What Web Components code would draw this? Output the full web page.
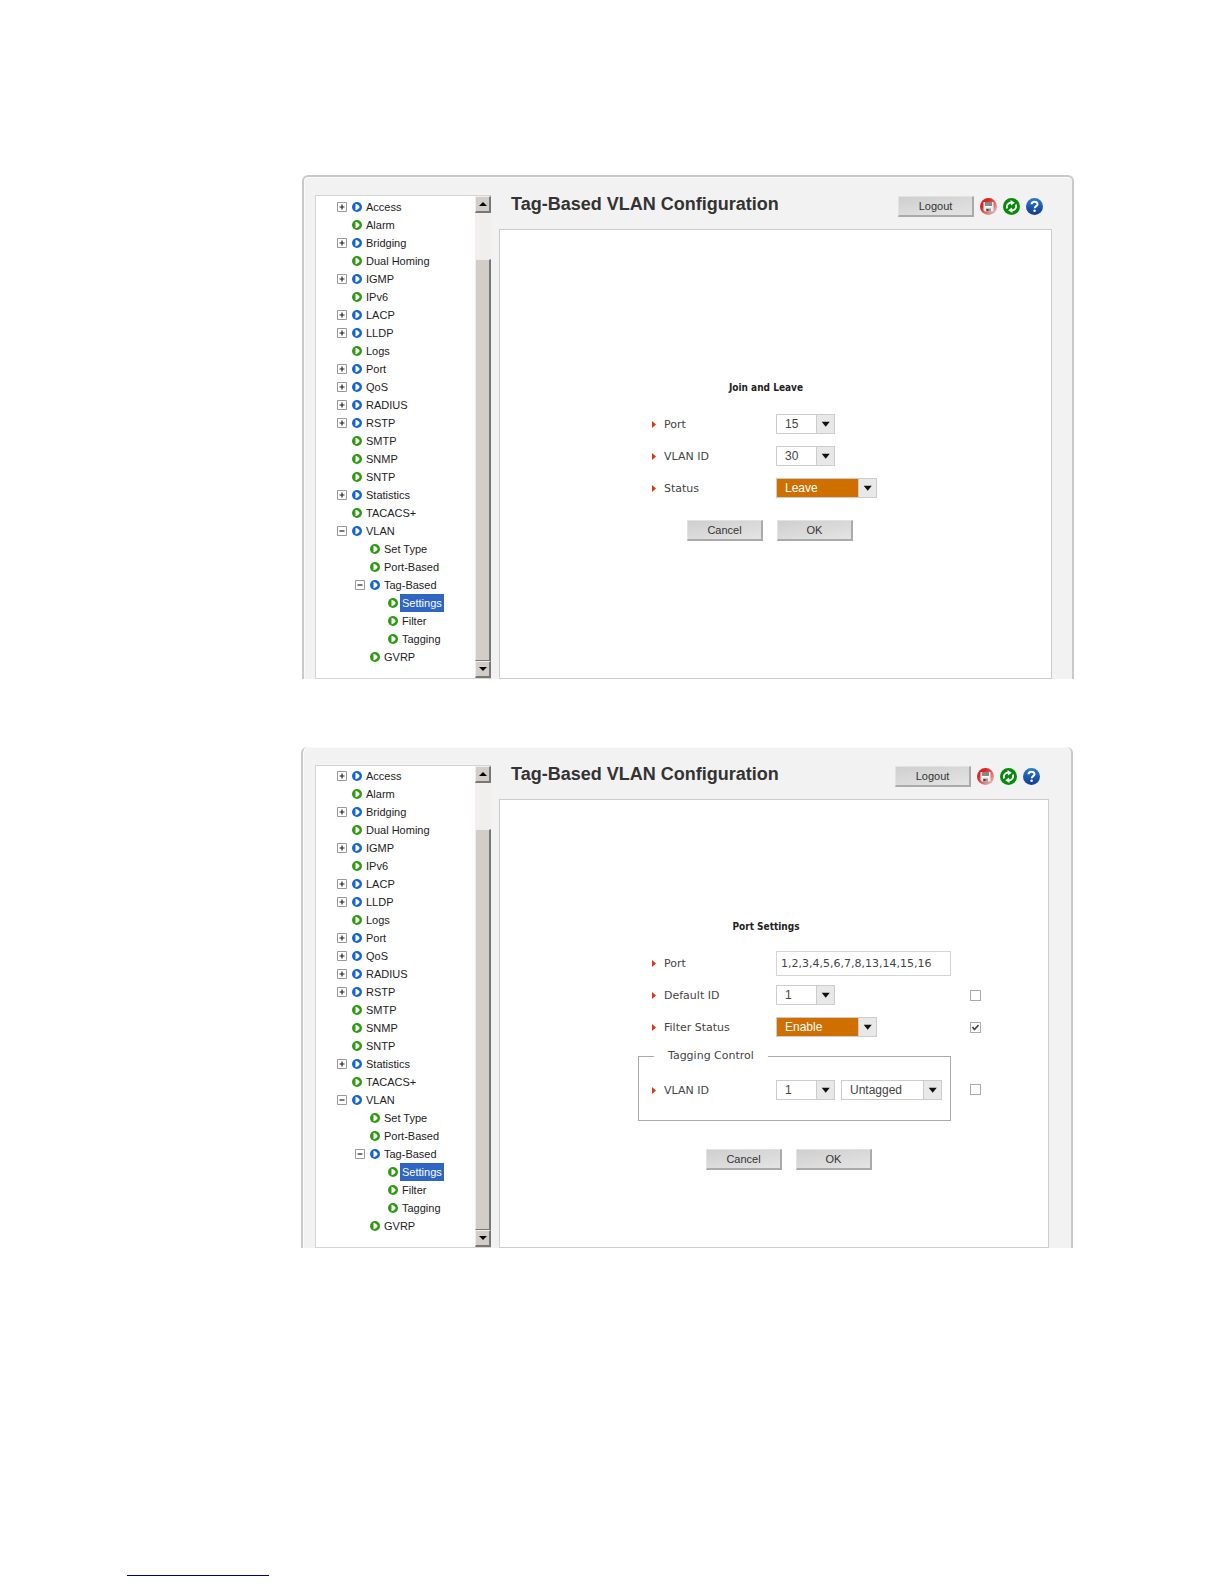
<!DOCTYPE html>
<html lang="en">
<head>
<meta charset="utf-8">
<title>Tag-Based VLAN Configuration</title>
<style>
    body {
        margin: 0;
        background: #fff;
        font-family: "Liberation Sans", Arial, sans-serif;
        font-size: 11px;
        color: #222;
    }
    main {
        padding: 175px 150px 0 301px;
    }
    vlan-panel {
        margin-left: 1px;
    }
    vlan-panel + vlan-panel {
        margin: 68px 1px 0 0;
        --top-border: 0px;
        --side: 22px;
        --left-side: 12px;
        --tree-top: 1px;
    }
    footer {
        padding: 327px 0 8px 127px;
    }
    footer hr {
        width: 142px;
        margin: 0;
        border: 0;
        border-top: 1px solid #000080;
    }
</style>
</head>
<body>
<main>
    <vlan-panel heading="Tag-Based VLAN Configuration">
        <nav-tree slot="tree"></nav-tree>
        <config-form heading="Join and Leave" style="--form-top: 148px">
            <field-row label="Port" value="15"></field-row>
            <field-row label="VLAN ID" value="30"></field-row>
            <field-row label="Status" value="Leave" options="Join,Leave" active></field-row>
            <form-actions slot="actions"></form-actions>
        </config-form>
    </vlan-panel>
    <vlan-panel heading="Tag-Based VLAN Configuration">
        <nav-tree slot="tree"></nav-tree>
        <config-form heading="Port Settings" style="--form-top: 117px">
            <field-row label="Port" kind="text" value="1,2,3,4,5,6,7,8,13,14,15,16"></field-row>
            <field-row label="Default ID" value="1" check="off"></field-row>
            <field-row label="Filter Status" value="Enable" options="Enable,Disable" active check="on"></field-row>
            <tagging-group legend="Tagging Control">
                <field-row label="VLAN ID" value="1" second="Untagged"></field-row>
            </tagging-group>
            <form-actions slot="actions" style="--top: 28px; --left: 67px"></form-actions>
        </config-form>
    </vlan-panel>
</main>
<footer><hr></footer>

<script>
const CHECK_STYLE = `
    input[type=checkbox] {
        appearance: none;
        box-sizing: border-box;
        width: 11px;
        height: 11px;
        margin: 0;
        border: 1px solid #aaa;
        background: #fff;
    }
    input[type=checkbox]:checked {
        background: #fff url("data:image/svg+xml,%3Csvg xmlns='http://www.w3.org/2000/svg' viewBox='0 0 9 9'%3E%3Cpath d='M1.5 4l2 2.5L7.5 2' fill='none' stroke='%23444' stroke-width='1.7'/%3E%3C/svg%3E");
    }
`;

const BUTTON_STYLE = `
    .push {
        box-sizing: border-box;
        width: 76px;
        height: 21px;
        padding: 0;
        border: 1px solid;
        border-color: #e2e2e2 #aaa #aaa #e2e2e2;
        border-right-width: 2px;
        border-bottom-width: 2px;
        background: linear-gradient(170deg, #cfcfcf, #e4e4e4);
        font: 11px "Liberation Sans", Arial, sans-serif;
        color: #333;
        cursor: pointer;
    }
`;

class VlanPanel extends HTMLElement {
    constructor() {
        super();
        this.attachShadow({ mode: 'open' });
    }

    connectedCallback() {
        this.shadowRoot.innerHTML = `
            <style>
                ${BUTTON_STYLE}
                :host {
                    display: grid;
                    grid-template-columns: 176px 1fr;
                    column-gap: 8px;
                    padding: 18px var(--side, 20px) 0 var(--left-side, 11px);
                    background: #f2f2f2;
                    border: 2px solid #c9c9c9;
                    border-top-width: var(--top-border, 2px);
                    border-bottom: 0;
                    border-radius: 6px 6px 0 0;
                    box-shadow: inset 1px 1px #fafafa;
                }
                .right {
                    display: flex;
                    flex-direction: column;
                }
                header {
                    display: flex;
                    align-items: flex-start;
                    gap: 6px;
                    box-sizing: border-box;
                    height: 34px;
                    padding: 1px 9px 0 12px;
                }
                h1 {
                    flex: 1;
                    margin: 0;
                    font-size: 18px;
                    line-height: 16px;
                    color: #333;
                }
                svg {
                    width: 17px;
                    height: 17px;
                    margin-top: 2px;
                }
                .content {
                    flex: 1;
                    border: 1px solid #ccc;
                    background: #fff;
                }
            </style>
            <slot name="tree"></slot>
            <div class="right">
                <header>
                    <h1>${this.getAttribute('heading')}</h1>
                    <button class="push" type="button">Logout</button>
                    <svg viewBox="0 0 17 17">
                        <defs><linearGradient id="red" x1="0" y1="0" x2="1" y2="1"><stop offset=".3" stop-color="#e02020"/><stop offset=".8" stop-color="#dfa0a0"/></linearGradient></defs>
                        <circle cx="8.500" cy="8.500" r="8.500" fill="url(#red)"/>
                        <path d="M3.500 4h10v9.500h-8.500l-1.500-1.500z" fill="#eee"/>
                        <path d="M5 4h7v4.500H5z" fill="#888"/>
                        <path d="M5 8.500h7" stroke="#fff"/>
                        <path d="M6 10.500h5v3H6z" fill="#999"/>
                        <path d="M6.500 11h2v2h-2z" fill="#444"/>
                    </svg>
                    <svg viewBox="0 0 17 17">
                        <circle cx="8.500" cy="8.500" r="8.500" fill="#078a0a"/>
                        <path d="M4 10.500C3.200 7 5.200 4.800 8.200 4.500M13 6.500c.8 3.500-1.200 5.700-4.200 6" fill="none" stroke="#fff" stroke-width="1.900"/>
                        <path d="M7.500 2l4.300 2.800L8 7.500zM9.500 15l-4.300-2.800L9 9.500z" fill="#fff"/>
                    </svg>
                    <svg viewBox="0 0 17 17">
                        <defs><linearGradient id="blue" x2="0" y2="1"><stop stop-color="#2c7cc8"/><stop offset="1" stop-color="#103a90"/></linearGradient></defs>
                        <circle cx="8.500" cy="8.500" r="8.500" fill="url(#blue)"/>
                        <path d="M5.500 6.300C5.700 2.800 11.600 3 11.500 6.200c0 1.900-2.800 1.900-2.800 4" fill="none" stroke="#fff" stroke-width="2"/>
                        <circle cx="8.600" cy="12.700" r="1.300" fill="#fff"/>
                    </svg>
                </header>
                <div class="content"><slot></slot></div>
            </div>
        `;
    }
}

// [label, level, state]: "+" closed branch, "-" open branch, "" leaf
const TREE = [
    ['Access', 0, '+'], ['Alarm', 0, ''], ['Bridging', 0, '+'], ['Dual Homing', 0, ''],
    ['IGMP', 0, '+'], ['IPv6', 0, ''], ['LACP', 0, '+'], ['LLDP', 0, '+'], ['Logs', 0, ''],
    ['Port', 0, '+'], ['QoS', 0, '+'], ['RADIUS', 0, '+'], ['RSTP', 0, '+'],
    ['SMTP', 0, ''], ['SNMP', 0, ''], ['SNTP', 0, ''], ['Statistics', 0, '+'],
    ['TACACS+', 0, ''], ['VLAN', 0, '-'], ['Set Type', 1, ''], ['Port-Based', 1, ''],
    ['Tag-Based', 1, '-'], ['Settings', 2, ''], ['Filter', 2, ''], ['Tagging', 2, ''],
    ['GVRP', 1, '']
];

class NavTree extends HTMLElement {
    constructor() {
        super();
        this.attachShadow({ mode: 'open' });
    }

    _item([label, level, state]) {
        const box = state ? `
            <svg viewBox="0 0 10 10">
                <path d="M.5.5h9v9h-9z" fill="#fff" stroke="#999"/>
                <path d="M2.500 5h5${state === '+' ? 'M5 2.500v5' : ''}" stroke="#222" stroke-width="1.200"/>
            </svg>` : '<span></span>';
        const selected = label === 'Settings' ? 'class="selected"' : '';
        return `
            <li style="--level: ${level}">
                ${box}
                <svg viewBox="0 0 10 10">
                    <circle cx="5" cy="5" r="5" fill="${state ? '#1766cf' : '#2f9a12'}"/>
                    <path d="M3.500 1.800C5.500 2.200 7.300 3.500 7.700 5 7.300 6.500 5.500 7.800 3.500 8.200z" fill="#fff"/>
                </svg>
                <a href="#" ${selected}>${label}</a>
            </li>`;
    }

    connectedCallback() {
        this.shadowRoot.innerHTML = `
            <style>
                :host {
                    display: grid;
                    grid-template-columns: 1fr 16px;
                    border: 1px solid #d5d5d5;
                    border-right: 0;
                    background: #fff;
                }
                ul {
                    margin: 0;
                    padding: var(--tree-top, 2px) 0 12px 21px;
                    list-style: none;
                }
                li {
                    display: grid;
                    grid-template-columns: 10px 10px auto;
                    justify-content: start;
                    align-items: center;
                    column-gap: 5px;
                    height: 18px;
                    padding-left: calc(var(--level) * 18px);
                }
                li svg {
                    width: 10px;
                    height: 10px;
                }
                a {
                    margin-left: -3px;
                    padding: 0 2px;
                    line-height: 18px;
                    color: #222;
                    text-decoration: none;
                }
                .selected {
                    background: #2f66c4;
                    color: #fff;
                }
                .bar {
                    display: flex;
                    flex-direction: column;
                    background: #f0efed;
                }
                .bar button, .thumb {
                    box-sizing: border-box;
                    border: 1px solid;
                    border-color: #eee #777 #777 #eee;
                    border-right-width: 2px;
                    background: #d2cec7;
                }
                .bar button {
                    display: grid;
                    place-items: center;
                    height: 17px;
                    padding: 0;
                    border-bottom-width: 2px;
                }
                .bar svg {
                    width: 8px;
                    height: 4px;
                }
                .thumb {
                    flex: 1;
                    margin-top: 46px;
                }
            </style>
            <ul>${TREE.map(item => this._item(item)).join('')}</ul>
            <div class="bar">
                <button type="button" aria-label="Scroll up"><svg viewBox="0 0 8 4"><path d="M0 4l4-4 4 4z"/></svg></button>
                <div class="thumb"></div>
                <button type="button" aria-label="Scroll down"><svg viewBox="0 0 8 4"><path d="M0 0l4 4 4-4z"/></svg></button>
            </div>
        `;
    }
}

class ConfigForm extends HTMLElement {
    constructor() {
        super();
        this.attachShadow({ mode: 'open' });
    }

    connectedCallback() {
        this.shadowRoot.innerHTML = `
            <style>
                :host {
                    display: block;
                    padding: var(--form-top) 0 0 139px;
                }
                h2 {
                    width: 254px;
                    margin: 0 0 10px;
                    font: bold 10px/20px "DejaVu Sans Condensed", "Open Sans", sans-serif;
                    text-align: center;
                    color: #222;
                }
            </style>
            <form>
                <h2>${this.getAttribute('heading')}</h2>
                <slot></slot>
                <slot name="actions"></slot>
            </form>
        `;
    }
}

class FieldRow extends HTMLElement {
    constructor() {
        super();
        this.attachShadow({ mode: 'open' });
    }

    _select(value, id, size, options) {
        const items = options.map(o => `<option ${o === value ? 'selected' : ''}>${o}</option>`).join('');
        return `
            <span class="pick ${size}">
                <select ${id}>${items}</select>
                <svg viewBox="0 0 18 18"><path d="M5 6.500h8.500L9.200 12z" fill="#111"/></svg>
            </span>`;
    }

    connectedCallback() {
        const label = this.getAttribute('label');
        const value = this.getAttribute('value');
        const second = this.getAttribute('second');
        const options = (this.getAttribute('options') || value).split(',');
        const check = this.getAttribute('check');
        const control = this.getAttribute('kind') === 'text'
            ? `<input id="field" type="text" value="${value}">`
            : this._select(value, 'id="field"', this.hasAttribute('active') ? 'wide active' : '', options);

        this.shadowRoot.innerHTML = `
            <style>
                ${CHECK_STYLE}
                :host {
                    display: grid;
                    grid-template-columns: 137px 194px auto;
                    align-items: center;
                    height: 32px;
                }
                label {
                    display: flex;
                    align-items: center;
                    gap: 8px;
                    padding-left: 13px;
                    font: 11px "DejaVu Sans", sans-serif;
                    color: #444;
                }
                label svg {
                    width: 4px;
                    height: 7px;
                }
                .controls {
                    display: flex;
                    gap: 6px;
                }
                .pick {
                    display: grid;
                    grid-template-columns: 1fr 18px;
                    box-sizing: border-box;
                    width: 59px;
                    height: 20px;
                    border: 1px solid #ccc;
                }
                .wide {
                    width: 101px;
                }
                .pick select {
                    grid-area: 1 / 1 / 2 / 3;
                    appearance: none;
                    padding: 0 8px;
                    border: 0;
                    border-radius: 0;
                    background: #fff;
                    font: 12px "Liberation Sans", Arial, sans-serif;
                    color: #444;
                }
                .active select {
                    background: #cf6f00;
                    color: #fff;
                }
                .pick svg {
                    grid-area: 1 / 2;
                    box-sizing: border-box;
                    width: 18px;
                    height: 18px;
                    border-left: 1px solid #ccc;
                    background: #e8e8e8;
                    pointer-events: none;
                }
                input[type=text] {
                    box-sizing: border-box;
                    width: 175px;
                    height: 25px;
                    padding: 0 4px;
                    border: 1px solid #d4d4d4;
                    font: 11px "DejaVu Sans", sans-serif;
                    color: #444;
                }
            </style>
            <label for="field">
                <svg viewBox="0 0 4 7"><path d="M0 0l4 3.500L0 7z" fill="#d8380c"/></svg>
                ${label}
            </label>
            <div class="controls">
                ${control}
                ${second ? this._select(second, 'aria-label="Tagging"', 'wide', ['Untagged', 'Tagged']) : ''}
            </div>
            ${check ? `<input type="checkbox" aria-label="Apply ${label}" ${check === 'on' ? 'checked' : ''}>` : ''}
        `;
    }
}

class TaggingGroup extends HTMLElement {
    constructor() {
        super();
        this.attachShadow({ mode: 'open' });
    }

    connectedCallback() {
        this.shadowRoot.innerHTML = `
            <style>
                ${CHECK_STYLE}
                :host {
                    display: flex;
                    align-items: center;
                    gap: 19px;
                    margin: 6px 0 0 -1px;
                }
                fieldset {
                    box-sizing: border-box;
                    width: 313px;
                    min-width: 0;
                    margin: 0;
                    padding: 11px 0 14px;
                    border: 1px solid #aaa;
                }
                legend {
                    margin-left: 15px;
                    padding: 0 14px;
                    font: 11px/14px "DejaVu Sans", sans-serif;
                    color: #444;
                }
                input {
                    margin-top: 8px !important;
                }
            </style>
            <fieldset>
                <legend>${this.getAttribute('legend')}</legend>
                <slot></slot>
            </fieldset>
            <input type="checkbox" aria-label="Apply ${this.getAttribute('legend')}">
        `;
    }
}

class FormActions extends HTMLElement {
    constructor() {
        super();
        this.attachShadow({ mode: 'open' });
    }

    connectedCallback() {
        this.shadowRoot.innerHTML = `
            <style>
                ${BUTTON_STYLE}
                :host {
                    display: flex;
                    gap: 14px;
                    padding: var(--top, 16px) 0 0 var(--left, 48px);
                }
            </style>
            <button class="push" type="button">Cancel</button>
            <button class="push" type="button">OK</button>
        `;
    }
}

customElements.define('vlan-panel', VlanPanel);
customElements.define('nav-tree', NavTree);
customElements.define('config-form', ConfigForm);
customElements.define('field-row', FieldRow);
customElements.define('tagging-group', TaggingGroup);
customElements.define('form-actions', FormActions);
</script>
</body>
</html>
